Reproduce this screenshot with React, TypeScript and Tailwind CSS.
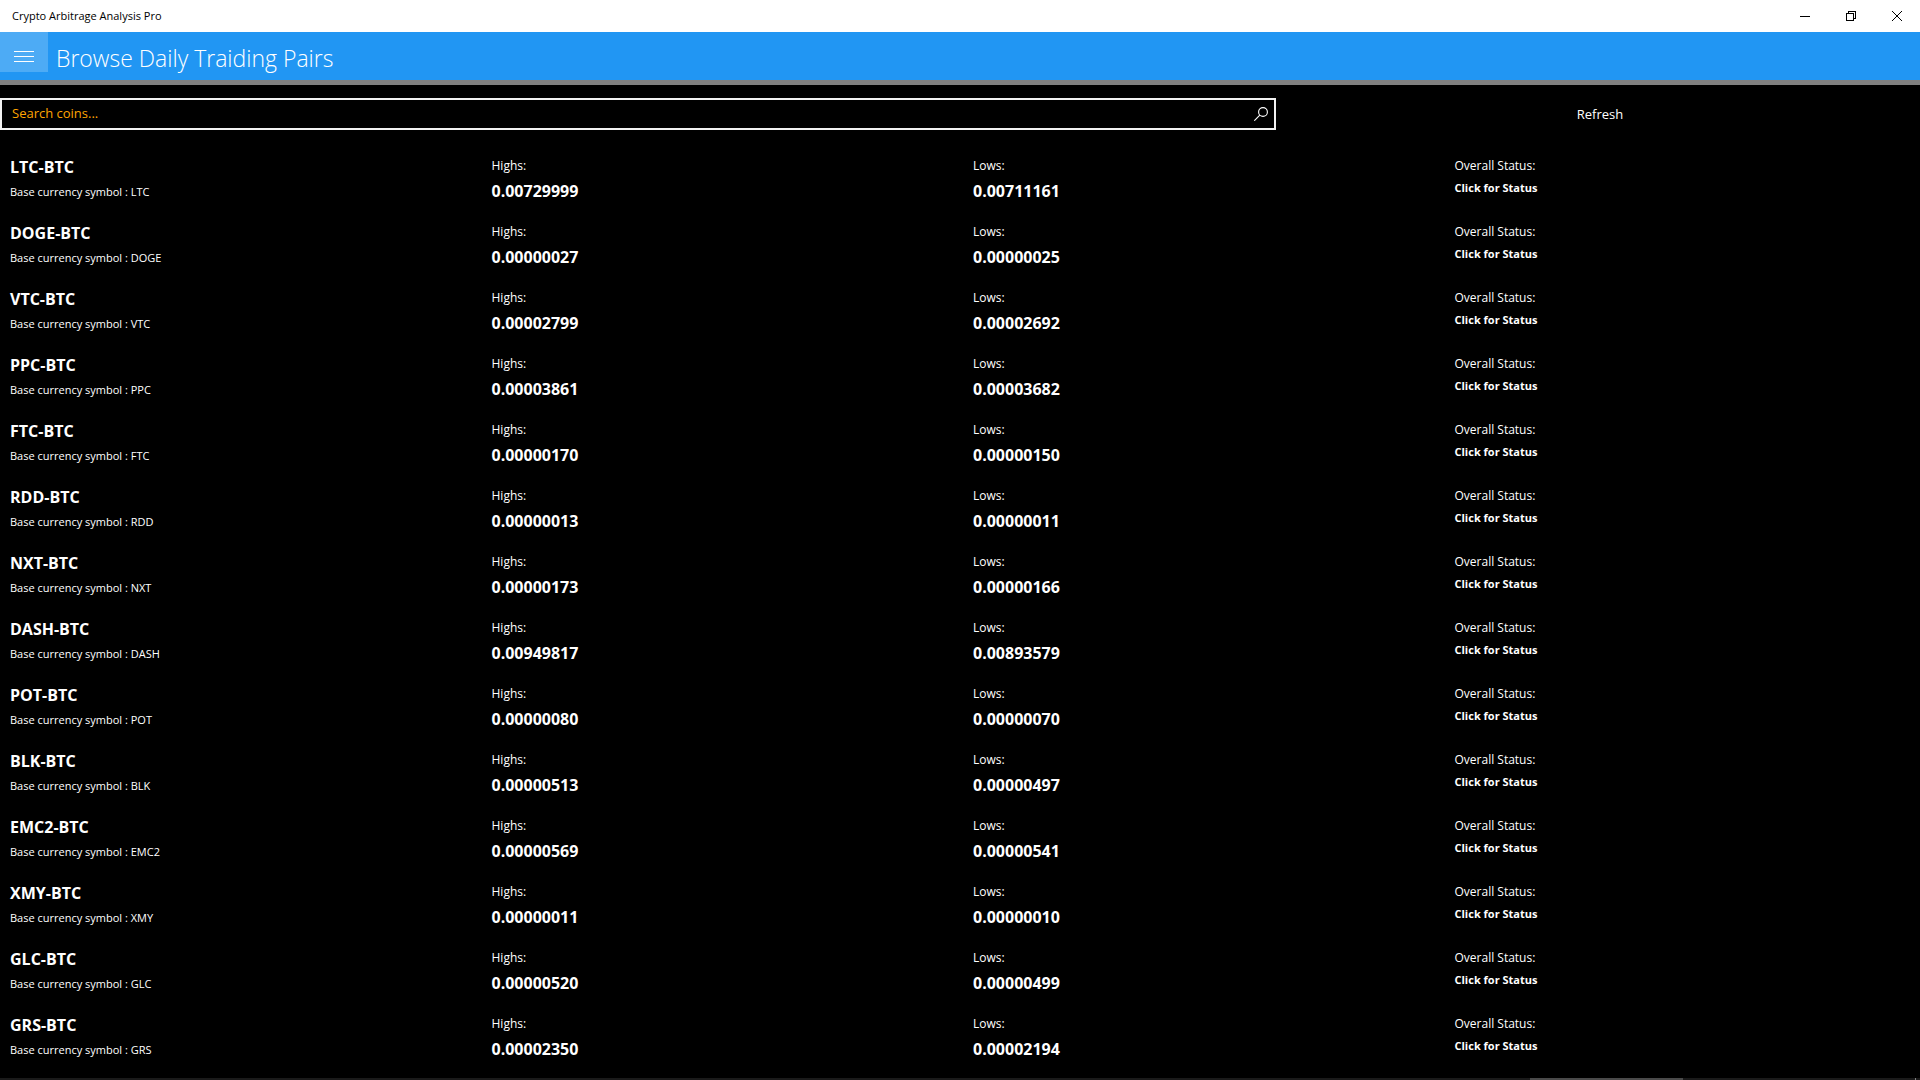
const pairs = [
  { base: 'LTC', high: '0.00729999', low: '0.00711161' },
  { base: 'DOGE', high: '0.00000027', low: '0.00000025' },
  { base: 'VTC', high: '0.00002799', low: '0.00002692' },
  { base: 'PPC', high: '0.00003861', low: '0.00003682' },
  { base: 'FTC', high: '0.00000170', low: '0.00000150' },
  { base: 'RDD', high: '0.00000013', low: '0.00000011' },
  { base: 'NXT', high: '0.00000173', low: '0.00000166' },
  { base: 'DASH', high: '0.00949817', low: '0.00893579' },
  { base: 'POT', high: '0.00000080', low: '0.00000070' },
  { base: 'BLK', high: '0.00000513', low: '0.00000497' },
  { base: 'EMC2', high: '0.00000569', low: '0.00000541' },
  { base: 'XMY', high: '0.00000011', low: '0.00000010' },
  { base: 'GLC', high: '0.00000520', low: '0.00000499' },
  { base: 'GRS', high: '0.00002350', low: '0.00002194' },
]

function TitleBar() {
  return (
    <div className="flex h-8 items-center justify-between bg-white pl-3 text-black">
      <span className="text-[11px] leading-4">Crypto Arbitrage Analysis Pro</span>
      <div className="flex h-8">
        <button aria-label="Minimize" className="flex w-[46px] items-center justify-center">
          <svg width="10" height="10" viewBox="0 0 10 10" shapeRendering="crispEdges">
            <path d="M0 5h10v1H0z" fill="currentColor" />
          </svg>
        </button>
        <button aria-label="Restore" className="flex w-[46px] items-center justify-center">
          <svg width="10" height="10" viewBox="0 0 10 10" fill="none" stroke="currentColor" shapeRendering="crispEdges">
            <path d="M.5 2.5h7v7h-7zM2.5 2.5v-2h7v7h-2" />
          </svg>
        </button>
        <button aria-label="Close" className="flex w-[46px] items-center justify-center">
          <svg width="10" height="10" viewBox="0 0 10 10" fill="none" stroke="currentColor">
            <path d="M0 0l10 10M10 0L0 10" />
          </svg>
        </button>
      </div>
    </div>
  )
}

function Header() {
  return (
    <header className="flex h-[53px] items-start border-b-[5px] border-[#808080] bg-[#2196f3]">
      <button aria-label="Menu" className="flex h-10 w-12 items-end justify-center bg-[#4dabf5] pb-[10px]">
        <svg width="20" height="11" viewBox="0 0 20 11" shapeRendering="crispEdges">
          <path d="M0 0h20v1H0zM0 5h20v1H0zM0 10h20v1H0z" fill="white" />
        </svg>
      </button>
      <h1 className="pt-2 pl-2 text-[23px] leading-9 font-light">Browse Daily Traiding Pairs</h1>
    </header>
  )
}

function SearchRow() {
  return (
    <div className="mt-[13px] grid grid-cols-[2fr_1fr]">
      <div className="mr-1 flex h-8 items-center border-2 border-[#f2f2f2]">
        <input
          type="text"
          aria-label="Search coins"
          placeholder="Search coins..."
          className="h-7 min-w-0 flex-1 bg-black pb-[2px] pl-[10px] text-[13px] leading-5 outline-none placeholder:text-[#ffa500]"
        />
        <button aria-label="Search" className="flex h-7 w-[26px] items-center justify-center">
          <svg width="14" height="14" viewBox="0 0 14 14" fill="none" stroke="white" strokeWidth="1.1">
            <circle cx="9" cy="5" r="4.4" />
            <path d="M5.8 8.2L.3 13.7" />
          </svg>
        </button>
      </div>
      <button className="h-8 text-[13px] leading-5">Refresh</button>
    </div>
  )
}

export default function App() {
  return (
    <div className="flex min-h-screen flex-col bg-black font-['Segoe_UI','Open_Sans',sans-serif] text-white">
      <TitleBar />
      <Header />
      <SearchRow />

      {/* Trading pairs */}
      <ul className="mt-[22px]">
        {pairs.map((pair) => (
          <li key={pair.base} className="grid h-[66px] grid-cols-4 gap-[26px] px-[10px]">
            <div className="pt-1">
              <p className="text-[16px] leading-[22px] font-bold">{pair.base}-BTC</p>
              <p className="pt-[6px] text-[11px] leading-4">Base currency symbol : {pair.base}</p>
            </div>
            <div className="pt-1">
              <p className="text-[12px] leading-5">Highs:</p>
              <p className="pt-1 text-[16px] leading-[22px] font-bold">{pair.high}</p>
            </div>
            <div className="pt-1">
              <p className="text-[12px] leading-5">Lows:</p>
              <p className="pt-1 text-[16px] leading-[22px] font-bold">{pair.low}</p>
            </div>
            <div className="pt-1">
              <p className="text-[12px] leading-5">Overall Status:</p>
              <button className="block pt-1 text-[11px] leading-4 font-bold">Click for Status</button>
            </div>
          </li>
        ))}
      </ul>

      {/* Bottom edge strip */}
      <div className="mt-auto flex h-[2px] justify-end bg-[#1a1a1a] pr-1">
        <div className="mr-[232px] w-[153px] bg-[#4a4a4a]" />
        <div className="w-px bg-[#808080]" />
      </div>
    </div>
  )
}
